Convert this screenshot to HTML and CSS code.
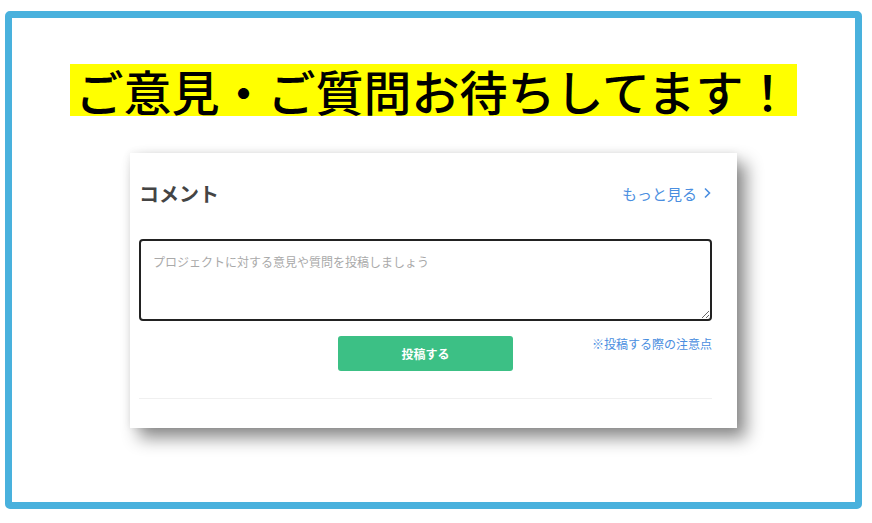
FILE: index.html
```html
<!DOCTYPE html>
<html lang="ja">
<head>
    <meta charset="UTF-8">
    <meta name="viewport" content="width=device-width, initial-scale=1.0">
    <title>ご意見・ご質問</title>
    <link rel="stylesheet" href="styles.css">
</head>
<body>
    <div class="frame">
        <h1 class="headline"><span>ご意見・ご質問お待ちしてます！</span></h1>

        <div class="comment-card">
            <div class="comment-head">
                <h2>コメント</h2>
                <a href="#" class="more-link">もっと見る
                    <svg width="9" height="12" viewBox="0 0 9 12"><path d="M2 1.5 L6.5 6 L2 10.5" fill="none" stroke="currentColor" stroke-width="1.6"/></svg>
                </a>
            </div>
            <textarea class="comment-input" placeholder="プロジェクトに対する意見や質問を投稿しましょう"></textarea>
            <div class="comment-actions">
                <button class="post-button">投稿する</button>
                <a href="#" class="notes-link">※投稿する際の注意点</a>
            </div>
            <div class="divider"></div>
        </div>
    </div>
</body>
</html>
```

FILE: styles.css
```css
body {
    margin: 0;
    background-color: #fff;
    font-family: "Noto Sans CJK JP", "Noto Sans", sans-serif;
}
.frame {
    box-sizing: border-box;
    width: 857px;
    height: 498px;
    margin: 11px 0 0 5px;
    border: 7px solid #49b1dd;
    border-radius: 5px;
    display: flex;
    flex-direction: column;
    align-items: center;
    padding-top: 46px;
}
.headline {
    margin: 0;
    font-size: 48px;
    font-weight: 500;
    line-height: 52px;
    color: #000;
}
.headline span {
    display: block;
    background-color: #ffff00;
    padding: 0 5px;
}
.comment-card {
    box-sizing: border-box;
    width: 607px;
    height: 275px;
    margin-top: 37px;
    padding: 26px 25px 0 9px;
    background-color: #fff;
    box-shadow: 9px 10px 16px rgba(0, 0, 0, 0.45), 0 0 8px rgba(0, 0, 0, 0.08);
}
.comment-head {
    display: flex;
    justify-content: space-between;
    align-items: center;
    height: 28px;
}
.comment-head h2 {
    margin: 0;
    font-size: 20px;
    font-weight: 700;
    color: #444;
}
.more-link {
    display: flex;
    align-items: center;
    gap: 6px;
    font-size: 15px;
    color: #4a8ee0;
    text-decoration: none;
}
.comment-input {
    display: block;
    box-sizing: border-box;
    width: 100%;
    height: 82px;
    margin-top: 32px;
    padding: 12px 12px;
    border: 2px solid #222;
    border-radius: 4px;
    font-family: inherit;
    font-size: 12px;
    resize: vertical;
}
.comment-input::placeholder {
    color: #a9a9a9;
}
.comment-actions {
    position: relative;
    display: flex;
    justify-content: center;
    margin-top: 15px;
}
.post-button {
    width: 175px;
    height: 35px;
    border: none;
    border-radius: 3px;
    background-color: #3cc085;
    color: #fff;
    font-family: inherit;
    font-size: 12px;
    font-weight: 700;
    cursor: pointer;
}
.notes-link {
    position: absolute;
    right: 0;
    top: -1px;
    font-size: 12px;
    color: #4a8ee0;
    text-decoration: none;
}
.divider {
    height: 1px;
    margin-top: 27px;
    background-color: #f0f0f0;
}
```
